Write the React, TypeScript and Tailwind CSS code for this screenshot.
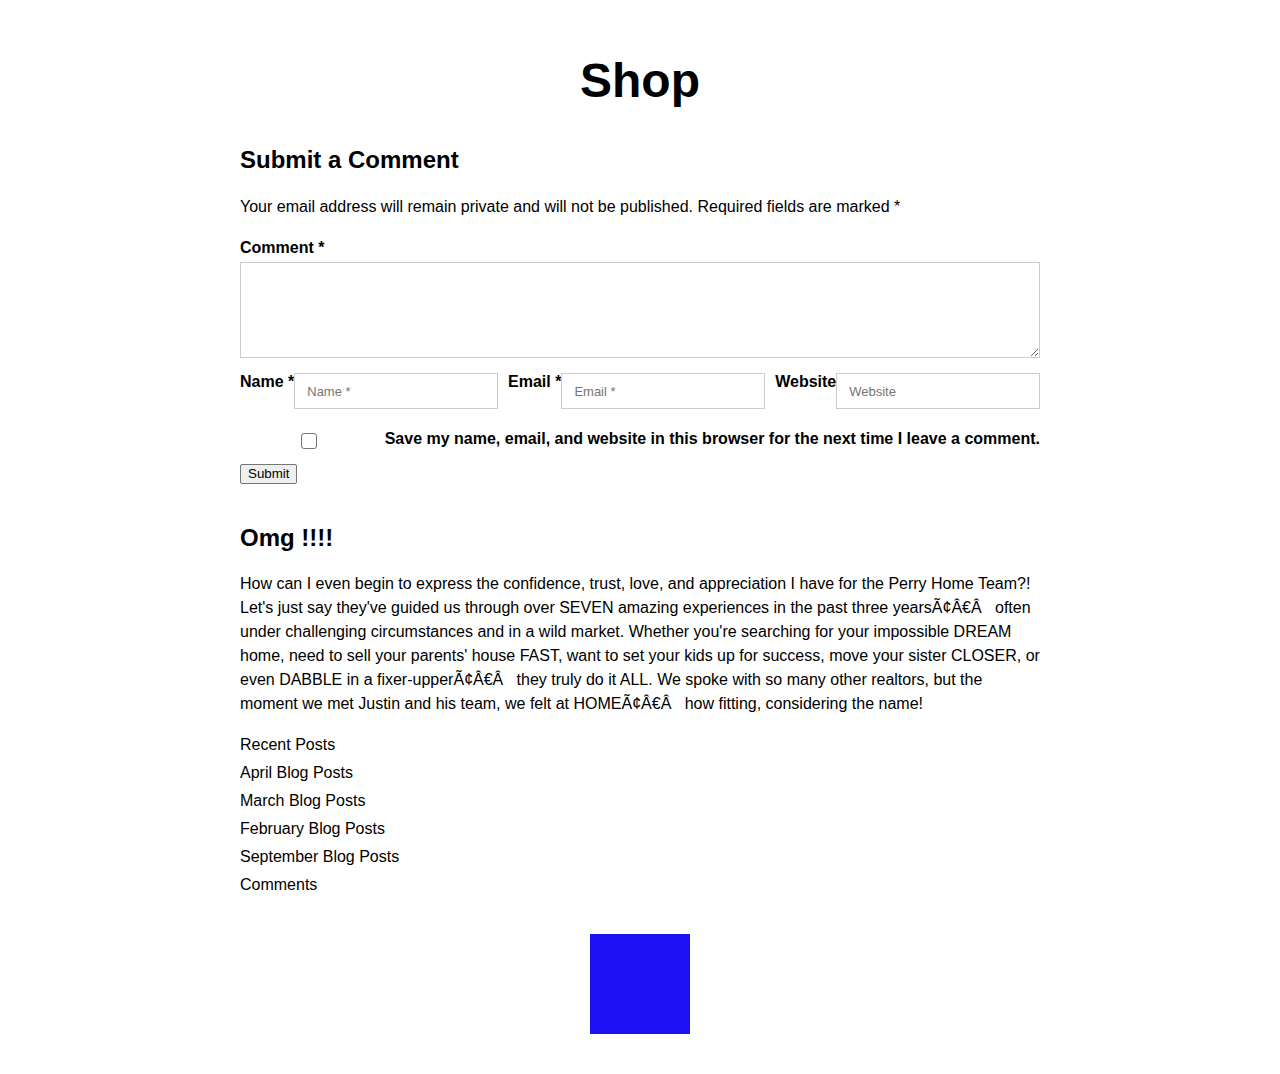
import React from 'react';

const gap = 'Ã¢Â€Â\u00a0\u00a0';

const links = [
  'Recent Posts',
  'April Blog Posts',
  'March Blog Posts',
  'February Blog Posts',
  'September Blog Posts',
  'Comments',
];

const Field: React.FC<{ label: string; placeholder: string }> = ({ label, placeholder }) => (
  <div className="flex items-start min-w-0">
    <label className="shrink-0 whitespace-nowrap font-bold text-[16px] leading-[16px] mt-[1px]">{label}</label>
    <input
      type="text"
      placeholder={placeholder}
      className="min-w-0 w-[204px] h-[36px] border border-[#cccccc] px-[12px] text-[13px] placeholder-[#757575] outline-none bg-white"
    />
  </div>
);

export default function App() {
  return (
    <div className="min-h-screen bg-white text-black font-['Liberation_Sans',Arial,sans-serif]">
      <div className="w-[800px] mx-auto pt-[53px] pb-[40px]">
        <h1 className="text-[48px] leading-[56px] font-bold text-center">Shop</h1>

        <h2 className="mt-[37px] text-[24px] leading-[28px] font-bold">Submit a Comment</h2>
        <p className="mt-[21px] text-[16px] leading-[24px]">
          Your email address will remain private and will not be published. Required fields are marked *
        </p>

        <form onSubmit={(e) => e.preventDefault()}>
          <label className="block mt-[17px] font-bold text-[16px] leading-[24px]">Comment *</label>
          <textarea className="block mt-[2px] w-full h-[96px] border border-[#cccccc] outline-none p-[8px] text-[14px]" />

          <div className="mt-[15px] flex items-start gap-[10px]">
            <Field label="Name *" placeholder="Name *" />
            <Field label="Email *" placeholder="Email *" />
            <Field label="Website" placeholder="Website" />
          </div>

          <div className="mt-[20px] flex items-start">
            <div className="ml-[61px] pt-[4px]">
              <input
                type="checkbox"
                className="block appearance-none w-[16px] h-[16px] border border-[#767676] rounded-[3px] bg-white"
              />
            </div>
            <span className="ml-auto font-bold text-[16px] leading-[20px]">
              Save my name, email, and website in this browser for the next time I leave a comment.
            </span>
          </div>

          <button
            type="submit"
            className="block mt-[15px] h-[20px] px-[7px] border border-[#767676] rounded-[2px] bg-[#efefef] text-[13.33px] leading-[16px]"
          >
            Submit
          </button>
        </form>

        <h2 className="mt-[40px] text-[24px] leading-[28px] font-bold">Omg !!!!</h2>
        <p className="mt-[20px] text-[16px] leading-[24px]">
          How can I even begin to express the confidence, trust, love, and appreciation I have for the Perry Home
          Team?! Let's just say they've guided us through over SEVEN amazing experiences in the past three years
          {gap} often under challenging circumstances and in a wild market. Whether you're searching for your
          impossible DREAM home, need to sell your parents' house FAST, want to set your kids up for success, move
          your sister CLOSER, or even DABBLE in a fixer-upper{gap} they truly do it ALL. We spoke with so many other
          realtors, but the moment we met Justin and his team, we felt at HOME{gap} how fitting, considering the
          name!
        </p>

        <ul className="mt-[15px]">
          {links.map((l) => (
            <li key={l} className="text-[16px] leading-[28px]">
              <a href="#">{l}</a>
            </li>
          ))}
        </ul>

        <div className="mt-[35px] mx-auto w-[100px] h-[100px] bg-[#1e10f5]" />
      </div>
    </div>
  );
}
